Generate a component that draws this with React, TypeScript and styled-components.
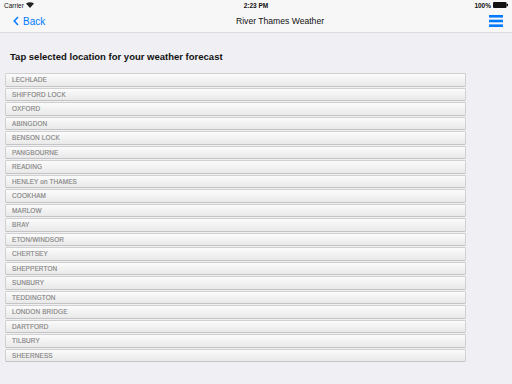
import styled, { createGlobalStyle } from "styled-components"

const locations = [
  'LECHLADE', 'SHIFFORD LOCK', 'OXFORD', 'ABINGDON', 'BENSON LOCK', 'PANGBOURNE',
  'READING', 'HENLEY on THAMES', 'COOKHAM', 'MARLOW', 'BRAY', 'ETON/WINDSOR',
  'CHERTSEY', 'SHEPPERTON', 'SUNBURY', 'TEDDINGTON', 'LONDON BRIDGE', 'DARTFORD',
  'TILBURY', 'SHEERNESS',
]

export default function App() {
  return <Page>
    <GlobalStyle />
    <StatusBar>
      <span>Carrier <Wifi /></span>
      <Clock>2:23 PM</Clock>
      <Battery>100% <BatteryIcon /></Battery>
    </StatusBar>
    <NavBar>
      <BackButton>
        <svg width="6" height="10" viewBox="0 0 6 10">
          <path d="M5 1 L1.2 5 L5 9" fill="none" stroke="#007aff" strokeWidth="1.5" />
        </svg>
        Back
      </BackButton>
      <Title>River Thames Weather</Title>
      <Menu>
        <svg width="14" height="12" viewBox="0 0 14 12">
          <rect x="0" y="0" width="14" height="2.6" fill="#007aff" />
          <rect x="0" y="4.7" width="14" height="2.6" fill="#007aff" />
          <rect x="0" y="9.4" width="14" height="2.6" fill="#007aff" />
        </svg>
      </Menu>
    </NavBar>
    <Content>
      <Heading>Tap selected location for your weather forecast</Heading>
      <List>
        {locations.map(l => <Row key={l}>{l}</Row>)}
      </List>
    </Content>
  </Page>
}

function Wifi() {
  return <svg width="8" height="6" viewBox="0 0 8 6" style={{verticalAlign: 'middle'}}>
    <path d="M0 1.6 Q4 -1 8 1.6 L4 6 Z" fill="#222" />
  </svg>
}

function BatteryIcon() {
  return <svg width="15" height="6" viewBox="0 0 15 6">
    <rect x="0" y="0" width="13.5" height="6" rx="1" fill="#111" />
    <rect x="13.5" y="1.8" width="1.5" height="2.4" fill="#111" />
  </svg>
}

const GlobalStyle = createGlobalStyle`
  body {
    margin: 0;
    background: #efeff4;
    font-family: "Liberation Sans", Arial, sans-serif;
  }
`

const Page = styled.div`
  width: 512px;
  height: 384px;
  background: #efeff4;
  overflow: hidden;
`

const StatusBar = styled.div`
  height: 10px;
  background: #f7f7f7;
  display: grid;
  grid-template-columns: 1fr auto 1fr;
  align-items: center;
  padding: 0 4px;
  font-size: 6.5px;
  color: #111;
  span { display: flex; align-items: center; gap: 2px; }
`

const Clock = styled.div`
  font-weight: bold;
  text-align: center;
`

const Battery = styled.div`
  display: flex;
  justify-content: flex-end;
  align-items: center;
  gap: 2px;
  font-weight: bold;
`

const NavBar = styled.div`
  height: 22px;
  background: #f7f7f7;
  border-bottom: 1px solid #dcdce0;
  display: flex;
  align-items: center;
  padding: 0 9px 0 13px;
`

const BackButton = styled.div`
  display: flex;
  align-items: center;
  gap: 4px;
  color: #007aff;
  font-size: 10px;
  width: 223px;
`

const Title = styled.div`
  flex: 1;
  font-size: 8.6px;
  color: #111;
`

const Menu = styled.div`
  display: flex;
  justify-content: flex-end;
  align-items: center;
`

const Content = styled.div`
  padding: 18px 0 0 5px;
`

const Heading = styled.h1`
  margin: 0 0 11px 5px;
  font-size: 9.5px;
  font-weight: bold;
  color: #111;
`

const List = styled.div`
  width: 461px;
  display: flex;
  flex-direction: column;
`

const Row = styled.div`
  height: 13.5px;
  box-sizing: border-box;
  border: 1px solid #d0d0d0;
  border-bottom: 1.5px solid #c4c4c4;
  margin-bottom: 1px;
  border-radius: 1.5px;
  background: linear-gradient(#fbfbfb, #e9e9e9);
  display: flex;
  align-items: center;
  padding-left: 6px;
  font-size: 6.4px;
  color: #858585;
  letter-spacing: 0.15px;
  -webkit-text-stroke: 0.15px #858585;
`
